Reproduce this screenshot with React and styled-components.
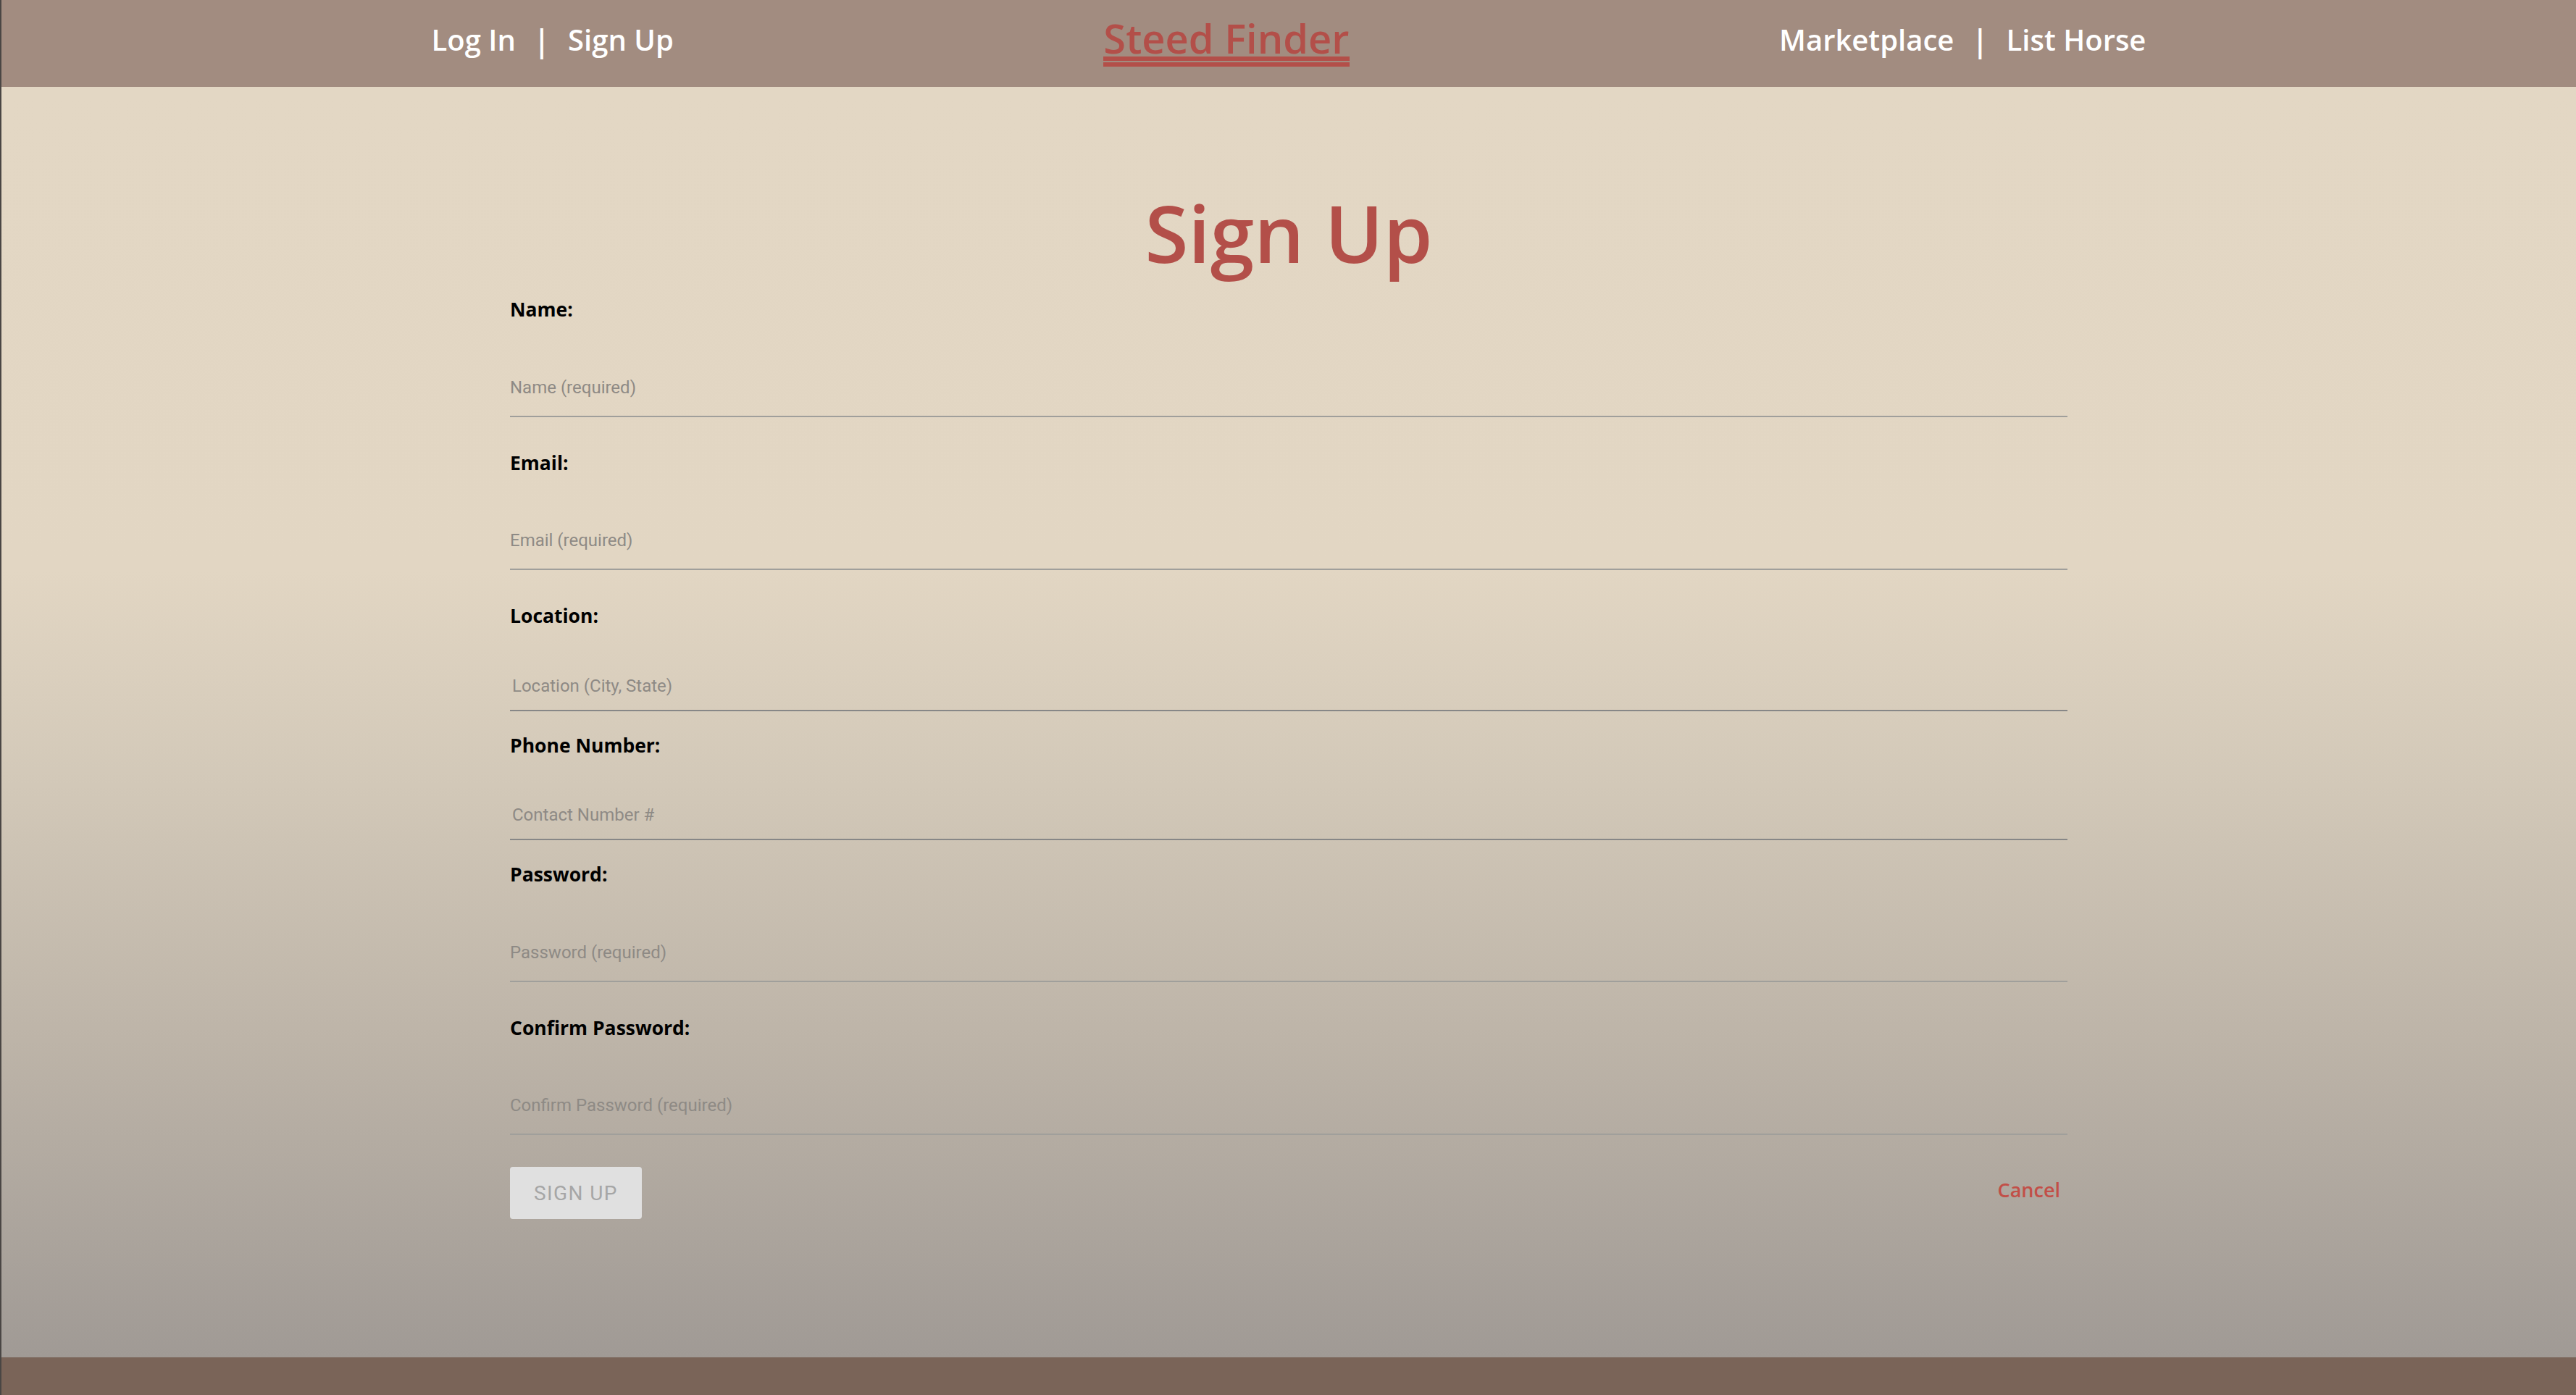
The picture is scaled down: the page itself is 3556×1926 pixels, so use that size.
import React from "react";
import styled, { createGlobalStyle } from "styled-components";

const GlobalStyle = createGlobalStyle`
  html, body {
    margin: 0;
    padding: 0;
    overflow: hidden;
  }
  body {
    font-family: "Open Sans", "Noto Sans", sans-serif;
  }
  * {
    box-sizing: border-box;
  }
`;

const fields = [
  { label: "Name:", placeholder: "Name (required)", required: true },
  { label: "Email:", placeholder: "Email (required)", required: true },
  { label: "Location:", placeholder: "Location (City, State)" },
  { label: "Phone Number:", placeholder: "Contact Number #" },
  { label: "Password:", placeholder: "Password (required)", required: true, type: "password" },
  { label: "Confirm Password:", placeholder: "Confirm Password (required)", required: true, type: "password" },
];

function App() {
  return (
    <Page>
      <GlobalStyle />
      <Header>
        <NavGroup>
          <NavLink href="#">Log In</NavLink>
          <Pipe>|</Pipe>
          <NavLink href="#">Sign Up</NavLink>
        </NavGroup>
        <Brand href="#">Steed Finder</Brand>
        <NavGroup>
          <NavLink href="#">Marketplace</NavLink>
          <Pipe>|</Pipe>
          <NavLink href="#">List Horse</NavLink>
        </NavGroup>
      </Header>

      <Main>
        <Title>Sign Up</Title>
        <Form onSubmit={(e) => e.preventDefault()}>
          {fields.map((f) => (
            <Field key={f.label} $required={f.required}>
              <Label>{f.label}</Label>
              <Input
                type={f.type || "text"}
                placeholder={f.placeholder}
                $required={f.required}
              />
            </Field>
          ))}
          <Actions>
            <SubmitButton type="submit" disabled>
              Sign Up
            </SubmitButton>
            <CancelLink href="#">Cancel</CancelLink>
          </Actions>
        </Form>
      </Main>

      <Footer />
    </Page>
  );
}

const Page = styled.div`
  height: 100vh;
  display: flex;
  flex-direction: column;
  border-left: 2px solid #4a4644;
  overflow: hidden;
`;

const Header = styled.header`
  height: 120px;
  flex-shrink: 0;
  background: #a28c80;
  display: flex;
  align-items: center;
  justify-content: space-evenly;
  padding-bottom: 10px;
`;

const NavGroup = styled.nav`
  display: flex;
  align-items: center;
`;

const NavLink = styled.a`
  color: #ffffff;
  text-decoration: none;
  font-size: 40px;
  font-weight: 600;
  line-height: 1;
`;

const Pipe = styled.span`
  color: #ffffff;
  font-size: 44px;
  font-weight: 600;
  line-height: 1;
  margin: 0 24px;
`;

const Brand = styled.a`
  color: #b34f49;
  text-decoration: none;
  font-size: 56px;
  font-weight: 600;
  line-height: 1;
  margin-top: 6px;
  padding-bottom: 12px;
  background:
    linear-gradient(#b34f49, #b34f49) left bottom 8px / 100% 6px no-repeat,
    linear-gradient(#b34f49, #b34f49) left bottom / 100% 6px no-repeat;
`;

const Main = styled.main`
  flex: 1;
  background: linear-gradient(
    to bottom,
    #e3d7c4 0%,
    #e2d6c3 38%,
    #d2c8b8 55%,
    #bdb4a8 75%,
    #a09a95 100%
  );
  display: flex;
  flex-direction: column;
  align-items: center;
  padding-top: 146px;
`;

const Title = styled.h1`
  margin: 0;
  color: #b34f49;
  font-size: 109px;
  font-weight: 600;
  line-height: 1;
`;

const Form = styled.form`
  width: 2150px;
  margin-top: 39px;
  display: flex;
  flex-direction: column;
`;

const Field = styled.div`
  display: flex;
  flex-direction: column;
  margin-bottom: ${(p) => (p.$required ? "50px" : "34px")};
`;

const Label = styled.label`
  color: #000000;
  font-size: 26.5px;
  font-weight: 700;
  line-height: 1;
`;

const Input = styled.input`
  width: 100%;
  height: ${(p) => (p.$required ? "55px" : "49px")};
  margin-top: ${(p) => (p.$required ? "80px" : "69px")};
  padding: 0 0 ${(p) => (p.$required ? "25px" : "19px")}
    ${(p) => (p.$required ? "0" : "3px")};
  border: none;
  border-bottom: 2px solid ${(p) => (p.$required ? "#a09f9b" : "#878787")};
  background: transparent;
  font-family: Roboto, "Liberation Sans", sans-serif;
  font-size: 24px;
  color: #333;
  outline: none;

  &::placeholder {
    color: #8e8a85;
  }
`;

const Actions = styled.div`
  display: flex;
  align-items: center;
  justify-content: space-between;
  margin-top: -6px;
`;

const SubmitButton = styled.button`
  height: 72px;
  padding: 0 33px;
  border: none;
  border-radius: 4px;
  background: #e0e0e0;
  color: #a6a6a6;
  font-family: Roboto, "Liberation Sans", sans-serif;
  font-size: 28px;
  font-weight: 400;
  letter-spacing: 1.4px;
  text-transform: uppercase;
`;

const CancelLink = styled.a`
  color: #c24f48;
  text-decoration: none;
  font-size: 27px;
  font-weight: 600;
  line-height: 1;
  padding: 0 10px 10px 0;
`;

const Footer = styled.footer`
  height: 52px;
  flex-shrink: 0;
  background: #7a6458;
`;

export default App;
